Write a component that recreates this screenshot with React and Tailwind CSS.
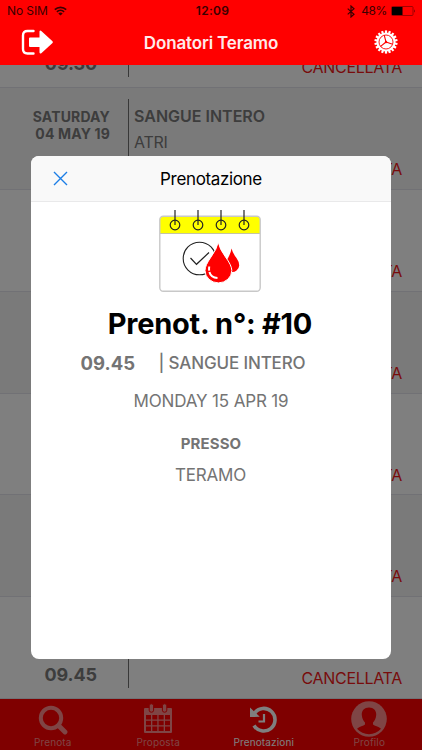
const ROWS = [
  { time: "09.30" },
  { line1: "SATURDAY", line2: "04 MAY 19", kind: "SANGUE INTERO", place: "ATRI" },
  {},
  {},
  {},
  {},
  { time: "09.45" },
];

function StatusBar() {
  return (
    <div className="flex h-[21px] items-center justify-between pl-[7px] pr-[6px] pt-px text-[12px] text-[#3a0000]">
      <div className="flex w-[120px] items-center gap-[6px]">
        <span className="tracking-[-0.1px]">No SIM</span>
        <svg width="13" height="10" viewBox="0 0 13 10" fill="none" stroke="#3a0000" strokeWidth="1.7">
          <path d="M0.8 3.6a8.2 8.2 0 0 1 11.4 0M2.9 5.8a5.2 5.2 0 0 1 7.2 0" />
          <path d="M6.5 9.6L4.3 7.5a3.1 3.1 0 0 1 4.4 0z" fill="#3a0000" stroke="none" />
        </svg>
      </div>
      <span className="pl-[2px] font-semibold tracking-[0.3px]">12:09</span>
      <div className="flex w-[120px] items-center justify-end gap-[4px]">
        <svg className="mr-[2px]" width="8" height="13" viewBox="0 0 8 13" fill="none" stroke="#3a0000" strokeWidth="1.2">
          <path d="M0.7 3.6L7 9.2L4 12V1L7 3.8L0.7 9.4" />
        </svg>
        <span className="tracking-[-0.4px]">48%</span>
        <svg width="25" height="10" viewBox="0 0 25 10">
          <rect x="0.5" y="0.5" width="21.5" height="9" rx="1" fill="none" stroke="#8a0000" strokeWidth="0.8" />
          <rect x="1" y="1" width="10.5" height="8" fill="#000" />
          <path d="M23.2 3.3q1.3 1.7 0 3.4z" fill="#3a0000" />
        </svg>
      </div>
    </div>
  );
}

const TEETH = Array.from({ length: 18 }, (_, i) => i * 20);

function NavBar() {
  return (
    <div className="flex h-[44px] items-center pl-[21px] pr-[24px]">
      <svg className="-mt-[2px]" width="33" height="26" viewBox="0 0 33 26">
        <path d="M12.5 2H6.5Q2 2 2 6.5V20Q2 24.5 6.5 24.5H12.5" fill="none" stroke="#fff" strokeWidth="2.4" strokeLinecap="round" />
        <path d="M9 8.5H18.5V2.6Q18.8 1 20.3 2L31.5 12.2Q32.3 13.1 31.5 14L20.3 24.3Q18.8 25.2 18.5 23.6V18H9Q8 18 8 17V9.5Q8 8.5 9 8.5z" fill="#fff" />
      </svg>
      <h1 className="flex-1 whitespace-nowrap pr-[6px] text-center text-[17px] font-semibold leading-[22px] tracking-[-0.15px] text-[#ffeaea]">Donatori Teramo</h1>
      <svg className="-mt-[2px]" width="24" height="24" viewBox="-12 -12 24 24">
        {TEETH.map((a) => (
          <rect key={a} x="-1.1" y="-11.6" width="2.2" height="3" fill="#fff" transform={`rotate(${a})`} />
        ))}
        <circle r="9.6" fill="#fff" />
        <circle r="7" fill="none" stroke="#f00" strokeWidth="0.9" />
        <path d="M0 0L-1.8 -6.8M0 0L6.6 2.2M0 0L-5.4 4.4" stroke="#f00" strokeWidth="1.1" />
        <circle r="1.2" fill="#f00" />
      </svg>
    </div>
  );
}

function Row({ row, shaded }) {
  return (
    <li className={`flex h-[101.8px] shrink-0 border-b border-[#e2e2ea] ${shaded ? "bg-[#f5f5f5]" : "bg-white"}`}>
      <div className="flex w-[128px] flex-col items-end pt-[20px] text-right font-bold text-[#7a7a7a]">
        <div className="mr-[18px] h-[17px] text-[14px] leading-[17px] tracking-[0.15px]">{row.line1}</div>
        <div className="mr-[18px] h-[17px] text-[14px] leading-[17px] tracking-[0.15px]">{row.line2}</div>
        <div className="mr-[31px] mt-[12px] h-[24px] text-[18px] leading-[24px] tracking-[-0.1px]">{row.time}</div>
      </div>
      <div className="my-[10.5px] w-px bg-[#707070]" />
      <div className="flex flex-1 flex-col pl-[5px] pr-[20px] pt-[17px] text-[#7a7a7a]">
        <div className="h-[22px] text-[16px] font-semibold leading-[22px]">{row.kind}</div>
        <div className="mt-[5px] h-[20px] text-[16px] leading-[20px] tracking-[-0.3px]">{row.place}</div>
        <div className="mt-[6px] text-right text-[16px] leading-[22px] tracking-[-0.3px] text-[#f01818]">CANCELLATA</div>
      </div>
    </li>
  );
}

function Tab({ label, active, children }) {
  return (
    <div className={`flex flex-1 flex-col items-center ${active ? "text-white" : "text-[#ff8a8a]"}`}>
      <div className="flex h-[37px] items-center justify-center">{children}</div>
      <span className="text-[10px] leading-[13px] tracking-[0.15px]">{label}</span>
    </div>
  );
}

function TabBar() {
  return (
    <nav className="flex h-[51px] shrink-0 bg-[#ff0000]">
      <Tab label="Prenota">
        <svg className="mt-[5px]" width="30" height="30" viewBox="0 0 30 30" fill="none" stroke="currentColor">
          <circle cx="13" cy="13" r="10.2" strokeWidth="4" />
          <path d="M20.5 20.5L27 27" strokeWidth="4.8" strokeLinecap="round" />
        </svg>
      </Tab>
      <Tab label="Proposta">
        <svg className="mt-[2px]" width="30" height="31" viewBox="0 0 30 31">
          <path fill="currentColor" fillRule="evenodd" d="M2 5H28Q29 5 29 6V29Q29 30 28 30H2Q1 30 1 29V6Q1 5 2 5zM3 12V16.5H8V12zM9.3 12V16.5H14.3V12zM15.6 12V16.5H20.7V12zM22 12V16.5H27V12zM3 17.8V22.3H8V17.8zM9.3 17.8V22.3H14.3V17.8zM15.6 17.8V22.3H20.7V17.8zM22 17.8V22.3H27V17.8zM3 23.6V28H8V23.6zM9.3 23.6V28H14.3V23.6zM15.6 23.6V28H20.7V23.6zM22 23.6V28H27V23.6z" />
          <rect x="6.2" y="0.8" width="4.4" height="8.4" rx="2" fill="currentColor" stroke="#f00" strokeWidth="1" />
          <rect x="19.4" y="0.8" width="4.4" height="8.4" rx="2" fill="currentColor" stroke="#f00" strokeWidth="1" />
        </svg>
      </Tab>
      <Tab label="Prenotazioni" active>
        <svg className="mr-px mt-[3px]" width="28" height="28" viewBox="0 0 28 28" fill="none" stroke="currentColor">
          <path d="M5.5 8.2A11.3 11.3 0 1 1 5 20.5" strokeWidth="3.6" />
          <path d="M1 2.5L10.8 11.8L1 12z" fill="currentColor" stroke="none" />
          <path d="M15 9V16.5H9.5" strokeWidth="2.2" />
        </svg>
      </Tab>
      <Tab label="Profilo">
        <svg className="mt-[2px]" width="36" height="36" viewBox="0 0 36 36">
          <circle cx="18" cy="18" r="17.8" fill="currentColor" />
          <path fill="#f00" d="M18 6.5c5 0 7.5 3.4 7.2 7.5-.2 3.8-1.8 6-3.2 7.6v2c1.5 1.3 5.5 2 8 4.2A16 16 0 0 1 6 27.8c2.5-2.2 6.5-2.9 8-4.2v-2c-1.4-1.6-3-3.8-3.2-7.6-.3-4.1 2.2-7.5 7.2-7.5z" />
        </svg>
      </Tab>
    </nav>
  );
}

function BookingIcon() {
  return (
    <svg className="mr-[2px]" width="102" height="83" viewBox="0 0 102 83">
      <rect x="0.8" y="6.2" width="100.4" height="75" rx="3.5" fill="#fff" />
      <path d="M1 23.5V9.5Q1 6.5 4 6.5H98Q101 6.5 101 9.5V23.5z" fill="#ffff00" />
      <path d="M1 23.5H101" stroke="#c4c4a0" strokeWidth="1.2" />
      <rect x="0.8" y="6.2" width="100.4" height="75" rx="3.5" fill="none" stroke="#c8c8c8" strokeWidth="1.4" />
      {[16, 39, 62, 85].map((x) => (
        <g key={x} fill="none" stroke="#222" strokeWidth="1.2">
          <path d={`M${x} 0V15`} />
          <circle cx={x} cy="15" r="4.8" />
        </g>
      ))}
      <circle cx="40.5" cy="48.5" r="16.3" fill="#fff" stroke="#222" strokeWidth="1.1" />
      <path d="M31.5 48L37.5 54.3L50 42.5" fill="none" stroke="#222" strokeWidth="1.2" />
      <path d="M72.5 38.5Q73.8 43.5 77.5 48Q80.3 52 80.2 55.5A7 7 0 0 1 72 62L67 51Q71.5 45 72.5 38.5z" fill="#f00" />
      <path d="M59.2 32Q60.500 39 66.500 47Q72.800 55.500 72.800 60.500A13.300 12.300 0 0 1 46 60.500Q46 55.500 52 47Q58 39 59.200 32z" fill="#f00" stroke="#fff" strokeWidth="1" />
      <path d="M50.2 56.5Q49 67.5 58.5 68" fill="none" stroke="#fff" strokeWidth="2" strokeDasharray="4 1.5 20" />
    </svg>
  );
}

function BookingDialog() {
  return (
    <section className="flex h-[503px] w-[360px] flex-col overflow-hidden rounded-[8px] bg-white">
      <header className="flex h-[46px] shrink-0 items-center border-b-[1.5px] border-[#e9e9ea] bg-[#f9f9f9] pl-[22px]">
        <svg width="15" height="15" viewBox="0 0 15 15" stroke="#1c7ee6" strokeWidth="1.4">
          <path d="M1 1L14 14M14 1L1 14" />
        </svg>
        <h2 className="flex-1 pr-[37px] text-center text-[17px] leading-[22px] tracking-[-0.35px] text-black">Prenotazione</h2>
      </header>
      <div className="flex flex-col items-center pt-[8px] text-[#747474]">
        <BookingIcon />
        <p className="mt-[13px] pr-[2px] text-[29px] font-bold leading-[36px] tracking-[-0.25px] text-black">Prenot. n°: #10</p>
        <div className="mt-[9px] flex w-[261px] items-center leading-[24px]">
          <span className="w-[78px] text-[18.5px] font-bold">09.45</span>
          <span className="whitespace-nowrap text-[17px] font-medium tracking-[-0.15px]">| SANGUE INTERO</span>
        </div>
        <p className="mt-[14px] text-[17px] leading-[24px] tracking-[-0.15px]">MONDAY 15 APR 19</p>
        <p className="mt-[19px] text-[15px] font-bold leading-[24px] tracking-[0.1px]">PRESSO</p>
        <p className="mt-[7px] pr-px text-[17px] leading-[24px] tracking-[-0.2px]">TERAMO</p>
      </div>
    </section>
  );
}

export default function App() {
  return (
    <div className="relative flex h-[750px] w-[422px] flex-col overflow-hidden bg-white font-['Inter','Liberation_Sans',sans-serif]">
      <header className="h-[65px] shrink-0 bg-[#ff0000]">
        <StatusBar />
        <NavBar />
      </header>
      <main className="flex flex-1 flex-col justify-end overflow-hidden">
        <ul className="flex flex-col">
          {ROWS.map((row, i) => (
            <Row key={i} row={row} shaded={i % 2 === 1} />
          ))}
        </ul>
      </main>
      <TabBar />
      <div className="absolute inset-x-0 bottom-0 top-[65px] flex items-start justify-center bg-black/50 pt-[91px]">
        <BookingDialog />
      </div>
    </div>
  );
}
